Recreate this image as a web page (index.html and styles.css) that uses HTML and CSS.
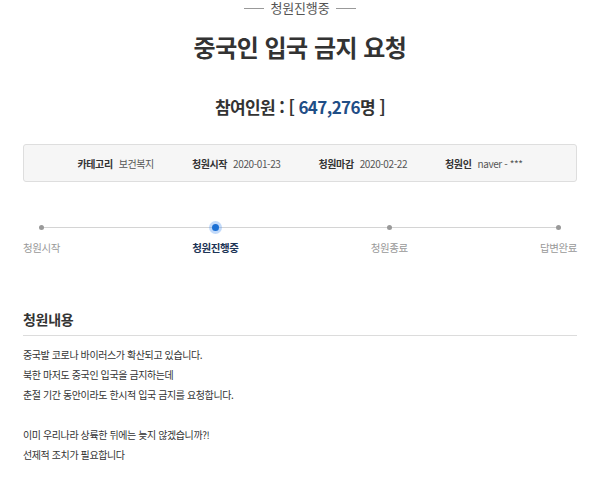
FILE: index.html
```html
<!DOCTYPE html>
<html lang="ko">
<head>
<meta charset="utf-8">
<title>중국인 입국 금지 요청</title>
<link rel="stylesheet" href="styles.css">
</head>
<body>
<div class="page">
  <div class="status"><span class="status-line"></span><span class="status-text">청원진행중</span><span class="status-line"></span></div>
  <h1 class="title">중국인 입국 금지 요청</h1>
  <div class="count">참여인원 : [ <span class="count-num">647,276</span>명 ]</div>
  <div class="info">
    <div class="info-item"><span class="info-label">카테고리</span><span class="info-value">보건복지</span></div>
    <div class="info-item"><span class="info-label">청원시작</span><span class="info-value">2020-01-23</span></div>
    <div class="info-item"><span class="info-label">청원마감</span><span class="info-value">2020-02-22</span></div>
    <div class="info-item"><span class="info-label">청원인</span><span class="info-value">naver - ***</span></div>
  </div>
  <div class="timeline">
    <div class="step"><span class="dot"></span><span class="step-label">청원시작</span></div>
    <div class="step active"><span class="dot"></span><span class="step-label">청원진행중</span></div>
    <div class="step"><span class="dot"></span><span class="step-label">청원종료</span></div>
    <div class="step"><span class="dot"></span><span class="step-label">답변완료</span></div>
  </div>
  <h2 class="section-title">청원내용</h2>
  <div class="content">
    <p>중국발 코로나 바이러스가 확산되고 있습니다.</p>
    <p>북한 마저도 중국인 입국을 금지하는데</p>
    <p>춘절 기간 동안이라도 한시적 입국 금지를 요청합니다.</p>
    <p class="blank">&nbsp;</p>
    <p>이미 우리나라 상륙한 뒤에는 늦지 않겠습니까?!</p>
    <p>선제적 조치가 필요합니다</p>
  </div>
</div>
</body>
</html>
```

FILE: styles.css
```css
* { box-sizing: border-box; }
html, body { margin: 0; padding: 0; background: #fff; }
body {
  font-family: "Noto Sans CJK KR", "Noto Sans", sans-serif;
  color: #333;
  width: 600px;
  height: 494px;
  overflow: hidden;
}
.page { padding: 0 23px; }

.status {
  display: flex;
  justify-content: center;
  align-items: center;
  gap: 7px;
  height: 16px;
}
.status-line { width: 20px; height: 1px; background: #999; }
.status-text { font-size: 13px; line-height: 16px; color: #555; letter-spacing: -0.2px; }

.title {
  margin: 16px 0 0;
  text-align: center;
  font-size: 24px;
  line-height: 30px;
  font-weight: 700;
  color: #333;
  letter-spacing: -0.5px;
}

.count {
  margin-top: 33px;
  text-align: center;
  font-size: 17px;
  line-height: 24px;
  font-weight: 700;
  color: #333;
  letter-spacing: -0.6px;
}
.count-num { color: #1f4e86; }

.info {
  margin-top: 25px;
  height: 38px;
  border: 1px solid #dedede;
  border-radius: 3px;
  background: #f6f6f6;
  display: flex;
  justify-content: center;
  align-items: center;
  gap: 38px;
  font-size: 10px;
  letter-spacing: -0.4px;
}
.info-item { display: flex; gap: 6px; align-items: center; }
.info-label { font-weight: 700; color: #333; }
.info-value { color: #555; }

.timeline {
  position: relative;
  margin-top: 40px;
  display: flex;
  justify-content: space-between;
}
.timeline::before {
  content: "";
  position: absolute;
  left: 18px;
  right: 18px;
  top: 5px;
  height: 1px;
  background: #d4d4d4;
}
.step {
  position: relative;
  display: flex;
  flex-direction: column;
  align-items: center;
}
.dot {
  width: 5px;
  height: 5px;
  margin: 2.5px 0;
  border-radius: 50%;
  background: #999;
}
.step.active .dot {
  width: 7px;
  height: 7px;
  margin: 1.5px 0;
  background: #1a6fd4;
  box-shadow: 0 0 0 3px rgba(80, 150, 240, 0.35);
}
.step-label {
  margin-top: 10px;
  font-size: 10.5px;
  line-height: 12px;
  color: #999;
  letter-spacing: -0.4px;
}
.step.active .step-label { color: #1d3557; font-weight: 700; }

.section-title {
  margin: 55px 0 0;
  padding-bottom: 6px;
  border-bottom: 1px solid #dcdcdc;
  font-size: 14px;
  line-height: 20px;
  font-weight: 700;
  color: #333;
  letter-spacing: -0.3px;
}

.content { margin-top: 9px; }
.content p {
  margin: 0;
  font-size: 10px;
  line-height: 20px;
  color: #333;
  letter-spacing: -0.4px;
}
```
